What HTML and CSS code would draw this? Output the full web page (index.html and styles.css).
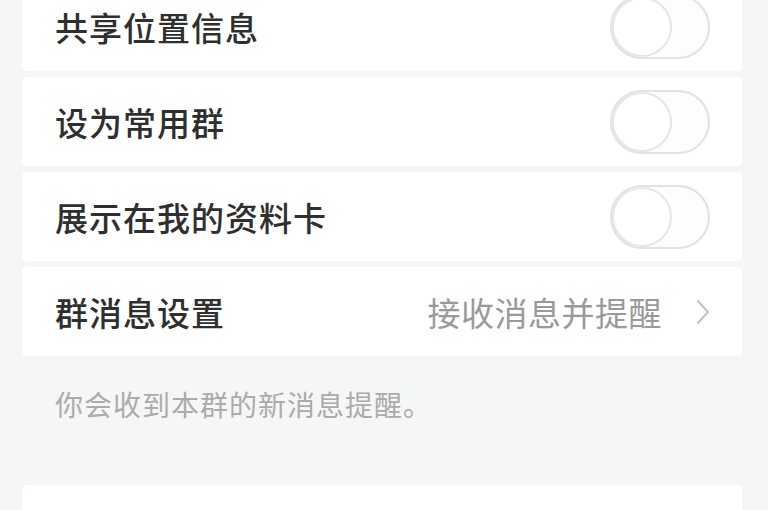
FILE: index.html
```html
<!DOCTYPE html>
<html lang="zh-CN">
<head>
<meta charset="utf-8">
<link rel="stylesheet" href="styles.css">
</head>
<body>
<div class="page">
  <div class="list">
    <div class="row">
      <span class="label">共享位置信息</span>
      <span class="toggle"><span class="knob"></span></span>
    </div>
    <div class="row">
      <span class="label">设为常用群</span>
      <span class="toggle"><span class="knob"></span></span>
    </div>
    <div class="row">
      <span class="label">展示在我的资料卡</span>
      <span class="toggle"><span class="knob"></span></span>
    </div>
    <div class="row">
      <span class="label">群消息设置</span>
      <span class="value">接收消息并提醒
        <svg class="chev" width="14" height="26" viewBox="0 0 14 26"><path d="M2 2 L12 13 L2 24" fill="none" stroke="#c4c4c4" stroke-width="2.2" stroke-linecap="round" stroke-linejoin="round"/></svg>
      </span>
    </div>
  </div>
  <p class="hint">你会收到本群的新消息提醒。</p>
  <div class="card-bottom"></div>
</div>
</body>
</html>
```
FILE: styles.css
```css
html, body {
  margin: 0;
  padding: 0;
  background: #f5f6f6;
}
body {
  font-family: "Noto Sans CJK SC", "Noto Sans", sans-serif;
  overflow: hidden;
  height: 510px;
}
.page {
  padding: 0 26px 0 22px;
}
.list {
  display: flex;
  flex-direction: column;
  gap: 6px;
  margin-top: -18px;
}
.row {
  height: 89px;
  background: #ffffff;
  display: flex;
  align-items: center;
  justify-content: space-between;
  padding: 0 32px 0 33px;
  border-radius: 4px;
}
.label {
  font-size: 33px;
  color: #2f2f2f;
  font-weight: 500;
  letter-spacing: 1px;
}
.value {
  display: flex;
  align-items: center;
  gap: 34px;
  font-size: 33px;
  color: #9a9a9a;
  letter-spacing: 0.5px;
}
.chev {
  display: block;
}
.toggle {
  width: 100px;
  height: 64px;
  box-sizing: border-box;
  border: 2px solid #e2e2e2;
  border-radius: 32px;
  background: #fdfdfd;
  display: flex;
  align-items: center;
}
.knob {
  width: 60px;
  height: 60px;
  box-sizing: border-box;
  border-radius: 50%;
  border: 2px solid #e6e6e6;
  background: #ffffff;
}
.hint {
  margin: 33px 0 0 33px;
  font-size: 28px;
  line-height: 30px;
  color: #ababab;
  letter-spacing: 1px;
}
.card-bottom {
  margin-top: 66px;
  height: 26px;
  background: #ffffff;
  border-radius: 4px 4px 0 0;
}
```
